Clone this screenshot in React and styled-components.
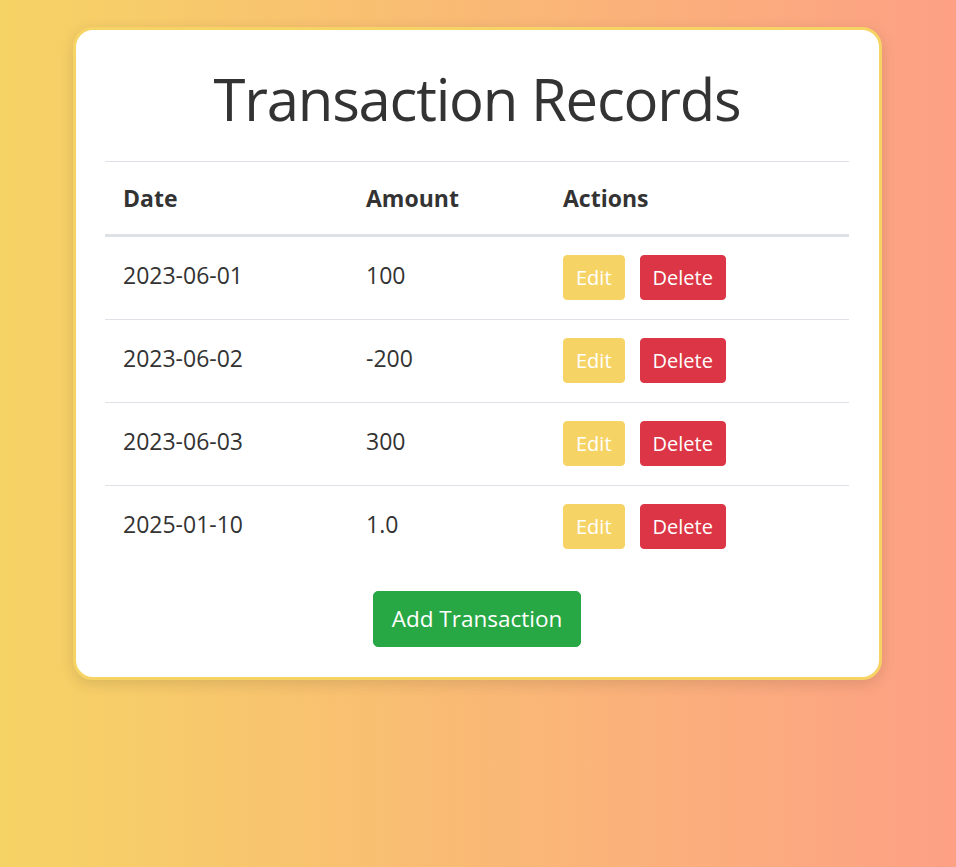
import React, { useState } from "react";
import styled, { createGlobalStyle } from "styled-components";

const GlobalStyle = createGlobalStyle`
  html, body {
    margin: 0;
    padding: 0;
  }
  body {
    font-family: "Open Sans", "Noto Sans", sans-serif;
    color: #333;
    background: linear-gradient(to right, #f6d365, #fda085);
    min-height: 867px;
  }
  * {
    box-sizing: border-box;
  }
`;

const initialRecords = [
  { id: 1, date: "2023-06-01", amount: "100" },
  { id: 2, date: "2023-06-02", amount: "-200" },
  { id: 3, date: "2023-06-03", amount: "300" },
  { id: 4, date: "2025-01-10", amount: "1.0" },
];

function App() {
  const [records, setRecords] = useState(initialRecords);

  const handleDelete = (id) => {
    setRecords(records.filter((r) => r.id !== id));
  };

  return (
    <>
      <GlobalStyle />
      <Page>
        <Card>
          <Title>Transaction Records</Title>
          <Table>
            <colgroup>
              <col style={{ width: 243 }} />
              <col style={{ width: 197 }} />
              <col style={{ width: 304 }} />
            </colgroup>
            <thead>
              <tr>
                <HeadCell>Date</HeadCell>
                <HeadCell>Amount</HeadCell>
                <HeadCell>Actions</HeadCell>
              </tr>
            </thead>
            <tbody>
              {records.map((record, i) => (
                <Row key={record.id} $last={i === records.length - 1}>
                  <Cell>{record.date}</Cell>
                  <Cell>{record.amount}</Cell>
                  <Cell>
                    <ActionButton $variant="edit">Edit</ActionButton>
                    <ActionButton
                      $variant="delete"
                      onClick={() => handleDelete(record.id)}
                    >
                      Delete
                    </ActionButton>
                  </Cell>
                </Row>
              ))}
            </tbody>
          </Table>
          <Footer>
            <AddButton>Add Transaction</AddButton>
          </Footer>
        </Card>
      </Page>
    </>
  );
}

export default App;

const Page = styled.div`
  display: flex;
  justify-content: center;
  padding: 27px 1px 0 0;
`;

const Card = styled.div`
  width: 809px;
  padding: 30px 30px 30px 29px;
  background: #fff;
  border: 3px solid #f6d365;
  border-radius: 20px;
  box-shadow: 0 4px 15px rgba(0, 0, 0, 0.12);
`;

const Title = styled.h1`
  margin: 0 0 24px;
  font-size: 58px;
  font-weight: 400;
  letter-spacing: -1.2px;
  line-height: 77px;
  text-align: center;
  color: #333;
`;

const Table = styled.table`
  width: 744px;
  border-collapse: collapse;
  table-layout: fixed;
  font-size: 23px;
  color: #333;
`;

const HeadCell = styled.th`
  padding: 19px 18px 18px;
  text-align: left;
  font-weight: 700;
  line-height: 35px;
  border-top: 1px solid #dee2e6;
  border-bottom: 3px solid #dee2e6;
`;

const Row = styled.tr`
  border-bottom: ${(p) => (p.$last ? "none" : "1px solid #dee2e6")};
`;

const Cell = styled.td`
  padding: 18px 18px 19px;
  line-height: 40px;
  vertical-align: top;
  white-space: nowrap;
`;

const ActionButton = styled.button`
  font-family: inherit;
  font-size: 20px;
  line-height: 29px;
  padding: 7px 12px;
  margin-right: 15px;
  border: 1px solid transparent;
  border-radius: 4px;
  color: #fff;
  cursor: pointer;
  vertical-align: top;
  background: ${(p) => (p.$variant === "edit" ? "#f6d365" : "#dc3545")};
  border-color: ${(p) => (p.$variant === "edit" ? "#f6d365" : "#dc3545")};
`;

const Footer = styled.div`
  display: flex;
  justify-content: center;
  margin-top: 23px;
`;

const AddButton = styled.button`
  font-family: inherit;
  font-size: 22.5px;
  line-height: 36px;
  padding: 9px 18px;
  border: 1px solid #28a745;
  border-radius: 5px;
  background: #28a745;
  color: #fff;
  cursor: pointer;
`;
